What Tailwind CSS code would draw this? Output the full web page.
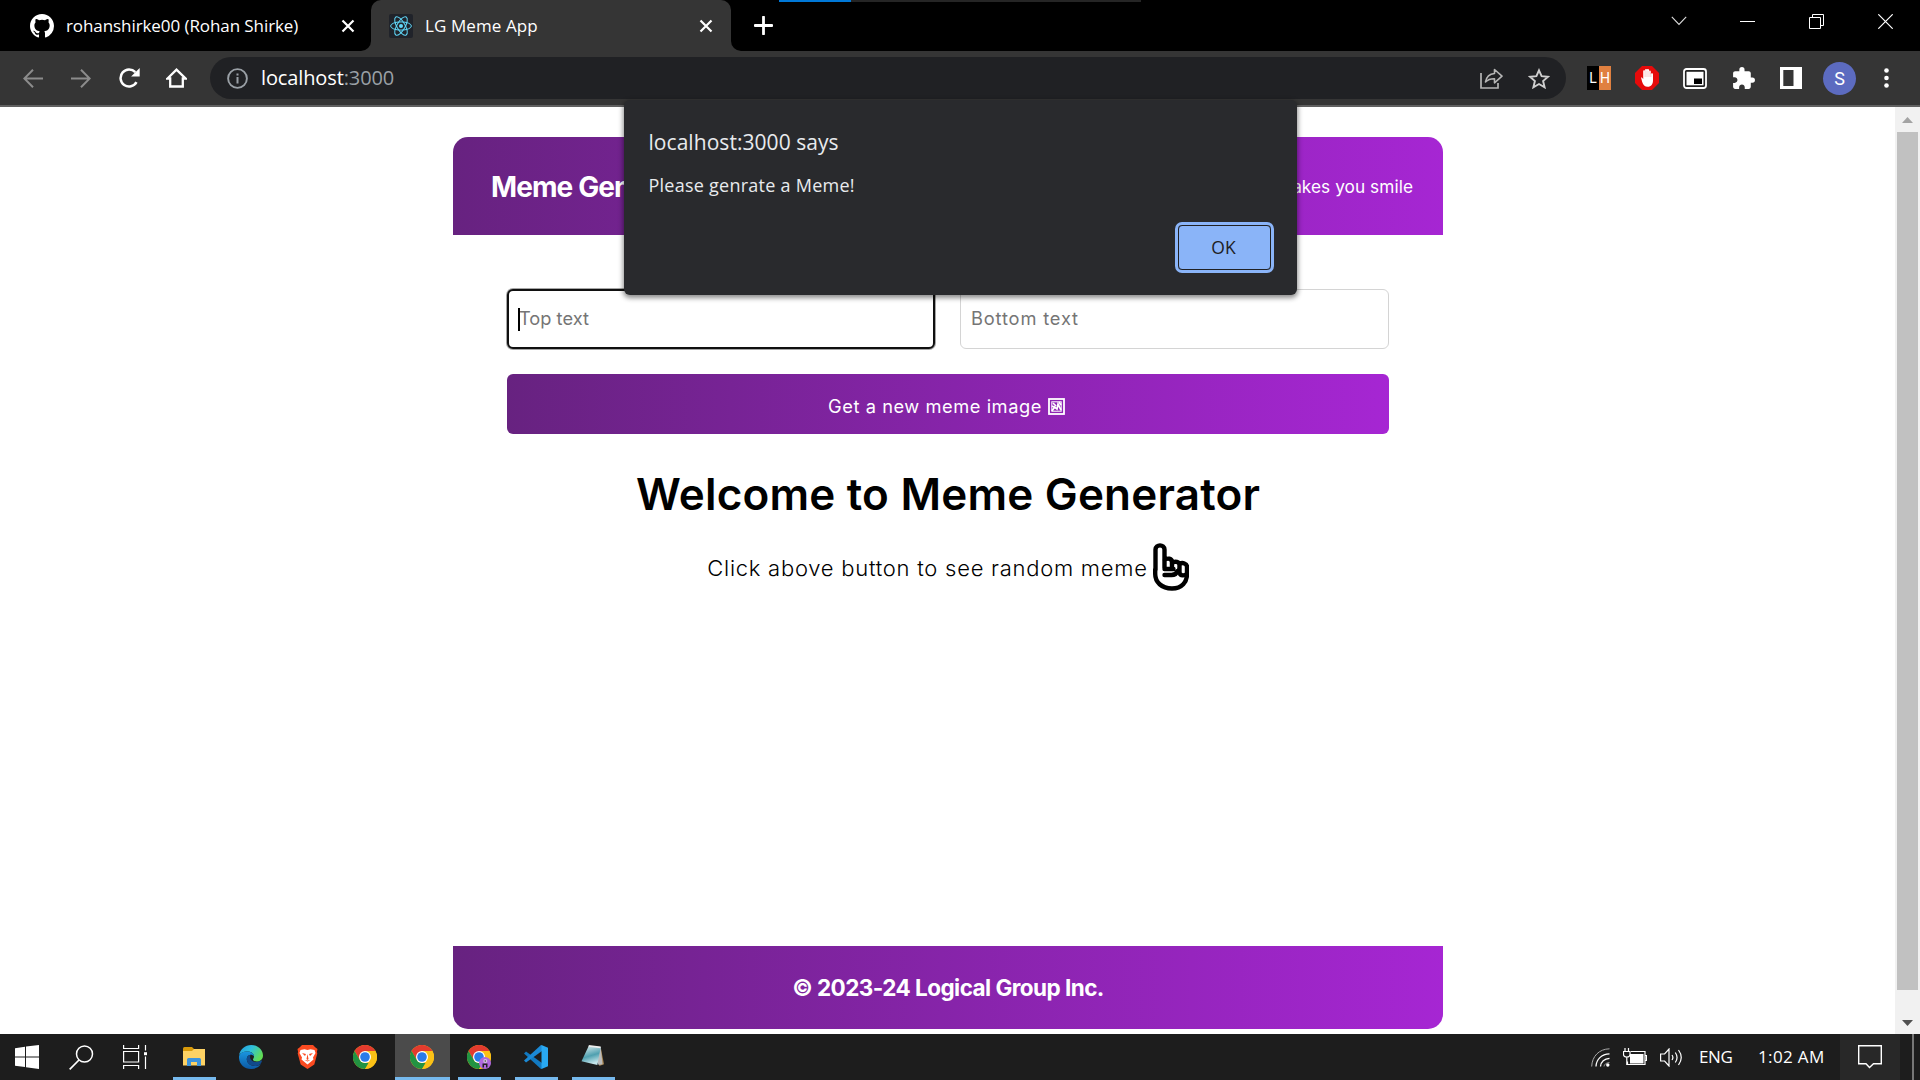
<!DOCTYPE html>
<html lang="en">
<head>
<meta charset="utf-8">
<title>LG Meme App</title>
<script src="https://cdn.jsdelivr.net/npm/@tailwindcss/browser@4"></script>
</head>
<body class="w-[1920px] h-[1080px] overflow-hidden flex flex-col relative bg-white font-['Open_Sans',sans-serif]">

<svg class="hidden">
  <defs>
    <symbol id="x" viewBox="0 0 14 14"><path d="M1.5 1.5l11 11M12.5 1.5l-11 11" stroke="#fff" stroke-width="2.2" fill="none"/></symbol>
    <symbol id="chrome" viewBox="0 0 48 48">
      <circle cx="24" cy="24" r="24" fill="#fbc116"/>
      <path d="M3.2 12A24 24 0 0 1 44.8 12H24L13.6 30z" fill="#e33b2e"/>
      <path d="M3.2 12L13.6 30A12 12 0 0 0 24 36h10.4L24 48A24 24 0 0 1 3.2 12z" fill="#229342"/>
      <path d="M34.4 30L24 48A24 24 0 0 0 44.8 12H24z" fill="#fbc116"/>
      <circle cx="24" cy="24" r="12" fill="#fff"/>
      <circle cx="24" cy="24" r="9.6" fill="#2a7be9"/>
    </symbol>
  </defs>
</svg>

<!-- Tab strip -->
<header class="h-[51px] shrink-0 bg-black flex relative">
  <div class="w-[371px] flex items-center pl-[30px] pr-[16px] bg-black rounded-br-[10px] z-10">
    <svg class="size-6 shrink-0" viewBox="0 0 16 16" fill="#fff"><path d="M8 0C3.58 0 0 3.58 0 8c0 3.54 2.29 6.53 5.47 7.59.4.07.55-.17.55-.38 0-.19-.01-.82-.01-1.49-2.01.37-2.53-.49-2.69-.94-.09-.23-.48-.94-.82-1.13-.28-.15-.68-.52-.01-.53.63-.01 1.08.58 1.23.82.72 1.21 1.87.87 2.33.66.07-.52.28-.87.51-1.07-1.78-.2-3.64-.89-3.64-3.95 0-.87.31-1.59.82-2.15-.08-.2-.36-1.02.08-2.12 0 0 .67-.21 2.2.82a7.6 7.6 0 0 1 4 0c1.53-1.04 2.2-.82 2.2-.82.44 1.1.16 1.92.08 2.12.51.56.82 1.27.82 2.15 0 3.07-1.87 3.75-3.65 3.95.29.25.54.73.54 1.48 0 1.07-.01 1.93-.01 2.2 0 .21.15.46.55.38A8 8 0 0 0 16 8c0-4.42-3.58-8-8-8z"/></svg>
    <span class="ml-[12px] text-[17px] tracking-[-0.08px] text-white whitespace-nowrap">rohanshirke00 (Rohan Shirke)</span>
    <svg class="size-[14px] ml-auto"><use href="#x"/></svg>
  </div>
  <div class="absolute left-[361px] top-[39px] w-[380px] h-3 bg-[#353535]"></div>
  <div class="w-[360px] flex items-center pl-[18px] pr-[18px] bg-[#353535] rounded-t-[10px] relative">
    <svg class="size-6 shrink-0" viewBox="0 0 24 24"><rect width="24" height="24" rx="2" fill="#20232a"/><g fill="none" stroke="#61dafb" stroke-width="1"><ellipse cx="12" cy="12" rx="10.4" ry="4.1"/><ellipse cx="12" cy="12" rx="10.4" ry="4.1" transform="rotate(60 12 12)"/><ellipse cx="12" cy="12" rx="10.4" ry="4.1" transform="rotate(120 12 12)"/></g><circle cx="12" cy="12" r="2" fill="#61dafb"/></svg>
    <span class="ml-[12px] text-[17px] tracking-[0.1px] text-white whitespace-nowrap">LG Meme App</span>
    <svg class="size-[14px] ml-auto"><use href="#x"/></svg>
  </div>
  <div class="flex-1 flex items-center pl-[23px] bg-black rounded-bl-[10px] z-10">
    <svg class="size-[19px]" viewBox="0 0 19 19"><path d="M9.5 1v17M1 9.5h17" stroke="#fff" stroke-width="2.8" stroke-linecap="round"/></svg>
    <div class="ml-auto flex items-center h-[42px] mb-[9px]">
      <svg class="w-4 h-2.5 mr-[53px]" viewBox="0 0 16 10"><path d="M.8.8L8 8.5 15.2.8" stroke="#ddd" stroke-width="1.1" fill="none"/></svg>
      <div class="w-[15px] h-px bg-white mr-[54px]"></div>
      <svg class="size-[15px] mr-[54px]" viewBox="0 0 15 15"><path d="M.5 3.5h11v11H.5zM3.5 3.5v-3h11v11h-3" stroke="#fff" fill="none"/></svg>
      <svg class="size-[15px] mr-[27px]" viewBox="0 0 15 15"><path d="M.3.3l14.4 14.4M14.7.3L.3 14.7" stroke="#fff" stroke-width="1.2"/></svg>
    </div>
  </div>
  <div class="absolute z-20 top-0 left-[779px] w-[362px] h-0.5 bg-[#252525]"><div class="w-[72px] h-full bg-[#0078d7]"></div></div>
</header>

<!-- Toolbar -->
<nav class="h-[56px] shrink-0 bg-[#353535] border-b-2 border-[#606060] flex items-center pl-[23px]">
  <svg class="w-5 h-[19px]" viewBox="0 0 20 19"><path d="M20 9.5H1.5M10 .8L1.3 9.5l8.7 8.7" stroke="#8c8c8c" stroke-width="2" fill="none"/></svg>
  <svg class="w-5 h-[19px] ml-[28px]" viewBox="0 0 20 19"><path d="M0 9.5h18.500M10 .8l8.700 8.700L10 18.200" stroke="#8c8c8c" stroke-width="2" fill="none"/></svg>
  <svg class="w-[22px] h-5 ml-[28px]" viewBox="0 0 22 20"><path d="M17.500 14.200A8.500 8.500 0 1 1 16.300 4.200" stroke="#fff" stroke-width="2.500" fill="none"/><path d="M20.700 0v8.600h-8.600z" fill="#fff"/></svg>
  <svg class="w-[21px] h-5 ml-[25px]" viewBox="0 0 21 20"><path d="M1.500 10.500L10.500 1.700l9 8.800h-2.700v8H4.200v-8z" stroke="#fff" stroke-width="2.300" fill="none"/></svg>
  <div class="ml-[23px] w-[1356px] h-[42px] rounded-full bg-[#202124] flex items-center pl-[17px] pr-[16px]">
    <svg class="size-[21px]" viewBox="0 0 21 21"><circle cx="10.500" cy="10.500" r="9.400" stroke="#9aa0a6" stroke-width="1.900" fill="none"/><path d="M9.500 9h2v6.500h-2zM9.500 5.500h2v2h-2z" fill="#9aa0a6"/></svg>
    <span class="ml-[13px] text-[20px] tracking-[-0.12px] text-white whitespace-nowrap">localhost<span class="text-[#9aa0a6]">:3000</span></span>
    <svg class="ml-auto w-[23px] h-[21px]" viewBox="0 0 23 21"><path d="M1 5v15h17v-5" stroke="#b5b5b5" stroke-width="1.700" fill="none"/><path d="M5.500 14C6.500 8.500 10 5.800 14.500 5.500V1.500l7.500 6.700-7.500 6.600v-4C10.500 10.700 8 11.500 5.500 14z" stroke="#b5b5b5" stroke-width="1.600" fill="none" stroke-linejoin="round"/></svg>
    <svg class="ml-[25px] w-[22px] h-[21px]" viewBox="0 0 22 21"><path d="M11 2.300l2.600 5.900 6.400.6-4.900 4.200 1.500 6.300L11 16l-5.600 3.300 1.500-6.300L2 8.800l6.400-.6z" stroke="#cfcfcf" stroke-width="1.900" fill="none"/></svg>
  </div>
  <div class="ml-[21px] size-6 flex text-[14px] leading-[25px] text-white text-center font-['Roboto',sans-serif]"><span class="w-3 h-6 bg-black">L</span><span class="w-3 h-6 bg-[#e08040]">H</span></div>
  <svg class="ml-6 size-6" viewBox="0 0 24 24"><path d="M7 0h10l7 7v10l-7 7H7l-7-7V7z" fill="#e60b0b"/><path d="M6 11.500c.8-.3 1.600.4 2.200 1.700V5.200c0-1.400 1.900-1.400 1.900 0V4c0-1.400 1.900-1.400 1.900 0 0-1.400 2-1.300 2 .2v1.300c0-1.200 1.800-1.200 1.800 0v2.700c.2-1.200 2.200-1.200 2.200.2v6c0 3.600-1.900 6.300-5.200 6.300-3.200 0-4.600-2-5.600-4.800z" fill="#fff"/><path d="M10.100 5v6M12 4.500V11M14 5v6M15.800 7v4" stroke="#e99" stroke-width=".5"/></svg>
  <svg class="ml-6 w-6 h-[21px]" viewBox="0 0 24 21"><rect x="1" y="1" width="22" height="19" rx="2.500" stroke="#fff" stroke-width="1.800" fill="#222"/><rect x="3.500" y="3.800" width="17" height="13.500" fill="#fff"/><rect x="11" y="10.500" width="8" height="5.500" fill="#000"/></svg>
  <svg class="ml-[24px] size-[25px]" viewBox="0 0 24 24" fill="#fff"><path d="M20.500 11H19V7c0-1.100-.9-2-2-2h-4V3.500a2.500 2.500 0 0 0-5 0V5H4c-1.100 0-1.990.9-1.990 2v3.800H3.500c1.490 0 2.700 1.210 2.700 2.700s-1.210 2.700-2.700 2.700H2V20c0 1.100.9 2 2 2h3.800v-1.500c0-1.490 1.210-2.700 2.700-2.700s2.700 1.210 2.700 2.700V22H17c1.100 0 2-.9 2-2v-4h1.500a2.500 2.500 0 0 0 0-5z"/></svg>
  <svg class="ml-[24px] w-[22px] h-[22px]" viewBox="0 0 22 22"><path fill-rule="evenodd" d="M0 0h22v22H0zM3.300 3v16h10.200V3z" fill="#fff"/></svg>
  <div class="ml-[21px] size-[33px] rounded-full bg-[#5c6bc0] text-white text-[18px] flex items-center justify-center font-['Roboto',sans-serif]">S</div>
  <svg class="ml-[28px] w-[5px] h-5" viewBox="0 0 5 20" fill="#fff"><circle cx="2.500" cy="2.500" r="2.300"/><circle cx="2.500" cy="10" r="2.300"/><circle cx="2.500" cy="17.500" r="2.300"/></svg>
</nav>

<!-- Page -->
<div class="h-[927px] shrink-0 flex">
  <main class="w-[1895px] pl-[453px] pt-[30px] font-['Inter',sans-serif] flex flex-col">
    <header class="w-[990px] h-[98px] rounded-t-[15px] bg-linear-to-r/srgb from-[#672280] to-[#a626d3] text-white flex items-center justify-between pl-[38px] pr-[30px] pt-[2px]">
      <h1 class="text-[28px] font-bold tracking-[-0.900px]">Meme Generator</h1>
      <p class="text-[17.250px] tracking-[0.050px]">Find your meme that makes you smile</p>
    </header>
    <section class="w-[882px] ml-[54px] mt-[54px] grid grid-cols-[428px_429px] justify-between gap-y-[25px]">
      <div class="h-[60px] rounded-[6px] border-2 border-[#101010] shadow-[0_0_0_1px_rgba(0,0,0,0.35)] bg-white flex items-center pl-[9px] text-[18.250px] text-[#757575]"><span class="w-[2px] h-[23px] bg-black -mr-px z-10"></span>Top text</div>
      <div class="h-[60px] rounded-[6px] border border-[#d4d4d4] bg-white flex items-center pl-[10px] text-[18.250px] tracking-[0.850px] text-[#757575]">Bottom text</div>
      <div class="col-span-2 h-[60px] pt-[6px] pr-[3px] rounded-[6px] bg-linear-to-r/srgb from-[#672280] to-[#a626d3] text-white text-[18.250px] tracking-[0.550px] flex items-center justify-center">Get a new meme image
        <svg class="ml-[6px] mb-[2px] size-[17px]" viewBox="0 0 17 17" fill="none" stroke="#fff"><rect x="1" y="1" width="15" height="15" stroke-width="1.800"/><rect x="3.800" y="3.800" width="9.400" height="9.400" stroke-width="1"/><path d="M4 13l2.500-4L9 11l1-5 3 6M5 5l3 3M11 4l2 3M4 8l2 1" stroke-width="1.700"/></svg>
      </div>
    </section>
    <h2 class="w-[990px] mt-[32px] text-center text-[44px] leading-[56px] font-semibold tracking-[0.200px] text-black">Welcome to Meme Generator</h2>
    <p class="w-[990px] h-[50px] mt-[20px] flex justify-center items-center text-[22px] tracking-[0.740px] font-light text-black"><span class="pt-[2px]">Click above button to see random meme</span>
      <svg class="ml-[5px] w-[36px] h-[48px] shrink-0" viewBox="0 0 36 48" fill="none" stroke="#000" stroke-width="4.400" stroke-linejoin="round" stroke-linecap="round"><path d="M2.500 27V6.500C2.500 1 11.500 1 11.500 6.500V25M11.500 17c3-2.500 7.500-1.500 7.500 2v7M19 20c3-2.500 7.500-1 7.500 2v8M26.500 21c3-2 7.500-.5 7.500 3v7c0 8-5 14.500-15 14.500C8.500 45.500 2.200 39 2.200 31v-5M26.500 30c1 3 5 3 7 1M11.500 32h7c3 0 5-1 6-4M11.500 26h9"/></svg>
    </p>
    <footer class="w-[990px] h-[83px] mt-auto mb-[5px] rounded-b-[15px] bg-linear-to-r/srgb from-[#672280] to-[#a626d3] text-white text-[22.500px] font-bold tracking-[-0.550px] flex items-center justify-center">© 2023-24 Logical Group Inc.</footer>
  </main>
  <div class="w-[25px] bg-[#f1f1f1] flex flex-col items-center pt-[10px] pb-[8px]">
    <svg class="w-[11px] h-[6px]" viewBox="0 0 11 6"><path d="M0 6L5.500 0 11 6z" fill="#a3a3a3"/></svg>
    <div class="mt-[9px] w-[21px] h-[858px] bg-[#c1c1c1]"></div>
    <svg class="mt-auto w-[11px] h-[6px]" viewBox="0 0 11 6"><path d="M0 0l5.500 6L11 0z" fill="#505050"/></svg>
  </div>
</div>

<!-- Alert dialog -->
<div class="absolute z-30 left-[624px] top-[100px] w-[673px] h-[195px] rounded-[6px] bg-[#292a2d] shadow-[0_2px_5px_1px_rgba(0,0,0,0.45)] text-[#e8eaed] pl-[24.500px] pr-[26px] flex flex-col">
  <div class="mt-[27px] text-[21px] leading-[30px] tracking-[0.050px]">localhost:3000 says</div>
  <div class="mt-[15px] text-[18px] leading-[26px] tracking-[0.250px]">Please genrate a Meme!</div>
  <div class="mt-[27px] self-end w-[93px] h-[45px] rounded-[4px] bg-[#8ab4f8] border border-[#202124] outline-[3px] outline-[#8ab4f8] text-[#202124] text-[17.500px] flex items-center justify-center pr-[2px]">OK</div>
</div>

<!-- Taskbar -->
<footer class="h-[46px] shrink-0 bg-[#1d1d1d] flex items-stretch text-white">
  <div class="w-[165px] flex items-center pl-[15px]">
    <svg class="size-6" viewBox="0 0 24 24" fill="#fff"><path d="M0 3.200l10-1.400v9.700H0zM11 1.600L24 0v11.500H11zM0 12.500h10v9.600L0 20.800zM11 12.500h13V24l-13-1.700z"/></svg>
    <svg class="ml-[30px] size-[25px]" viewBox="0 0 25 25"><circle cx="15.500" cy="9" r="8" stroke="#fff" stroke-width="1.500" fill="none"/><path d="M10 15L.7 24.300" stroke="#fff" stroke-width="1.700"/></svg>
    <svg class="ml-[29px] w-6 h-6" viewBox="0 0 24 24" fill="none" stroke="#fff" stroke-width="1.200"><path d="M.6 0v3.500h15V0M.6 6.500h15v10.500H.6zM.6 24v-3.500h15V24M22.500 0v5.500M22.500 11.500V24"/><path d="M21 7.200h3v3h-3z" fill="#fff" stroke="none"/></svg>
  </div>
  <div class="w-[58px] flex items-center justify-center relative">
    <svg class="w-[22px] h-[20px]" viewBox="0 0 22 20"><path d="M0 1.500Q0 0 1.500 0H9l2 2v4H0z" fill="#d99a0a"/><path d="M0 4h9l2-2h11v16.500H0z" fill="#fdd264"/><path d="M4 19v-6.500q0-1.500 1.500-1.500h11q1.500 0 1.500 1.500V19h-4v-4H8v4z" fill="#3d94dc"/></svg>
    <div class="absolute bottom-0 w-[43px] h-[3px] bg-[#76b9ed]"></div>
  </div>
  <div class="w-[56px] flex items-center justify-center">
    <svg class="size-6" viewBox="0 0 24 24"><defs><linearGradient id="e1" x1="0" x2="1" y1="0" y2=".5"><stop stop-color="#2297dd"/><stop offset=".5" stop-color="#2fc0dc"/><stop offset="1" stop-color="#61dc55"/></linearGradient><linearGradient id="e2" x1="0" x2="0" y1="0" y2="1"><stop stop-color="#1a96e0"/><stop offset="1" stop-color="#0c59a4"/></linearGradient></defs><path d="M0 10.500C1 4.200 6 0 12.200 0 19 0 24 4.800 24 10.500c0 3.500-2.600 6-6 6-2.500 0-4-1-4-2 0-.7 1-1.200 1-3.200 0-2.500-2.600-4.800-6.300-4.800C4 6.500 1 8.500 0 10.500z" fill="url(#e1)"/><path d="M0 11.500C.4 8.200 4 6.400 8.500 6.400c4 0 6.500 2.600 6.500 4.800-.8-1-2-1.600-3.400-1.500C9 10 7.500 12 7.800 14.500c.3 4 4 6.500 8.200 6.500 2 0 4.200-.6 6-1.800A12 12 0 0 1 12 24C5 24-.4 18.500 0 11.500z" fill="url(#e2)"/><path d="M7.800 14.500c-.2-2.500 1.300-4.500 3.800-4.800-1 1.500-.6 4 1 5.600 2 2 6 2.200 9.600.2.700-.3 1 .2.700.8-.4 1-.8 1.800-1.500 2.600-4.500 3.700-13 2.300-13.600-4.400z" fill="#114a8b"/></svg>
  </div>
  <div class="w-[58px] flex items-center justify-center pr-px">
    <svg class="w-[21px] h-6" viewBox="0 0 21 24"><path d="M5 0h11l2.500 2.500L20.500 4l-.6 3 .4 1.500-3 11L10.500 24l-6.800-4.500-3-11L1.100 7 .5 4l2-1.500z" fill="#fb4a20"/><path d="M3.500 5l4-.8 3 .8 3-.8 4 .8 1 3-2.500 4.500.5 2-3 2.500-3 2.500-3-2.500-3-2.500.5-2L2.500 8z" fill="#fff"/><path d="M5 8l4 1-1 2zM16 8l-4 1 1 2zM10.500 9l1 5-1 1-1-1zM7.500 15l3 1.500 3-1.500-3 .5z" fill="#fb4a20"/></svg>
  </div>
  <div class="w-[58px] flex items-center pl-[16px]"><svg class="size-6"><use href="#chrome"/></svg></div>
  <div class="w-[55px] flex items-center pl-[15px] bg-[#4b4b4b] relative"><svg class="size-6"><use href="#chrome"/></svg><div class="absolute left-0 bottom-0 w-full h-[3px] bg-[#76b9ed]"></div></div>
  <div class="w-[58px] flex items-center justify-center relative"><svg class="size-6"><use href="#chrome"/></svg>
    <svg class="absolute left-[29px] top-[23px] size-3" viewBox="0 0 12 12"><circle cx="6" cy="6" r="6" fill="#b068e0"/><path d="M3.500 6.500h5V10.500h-1.500V8h-2v2.500H3.500z" fill="#222"/><circle cx="6.300" cy="4" r="2" fill="#d5c8dc"/><circle cx="6.300" cy="4" r=".8" fill="#444"/></svg>
    <div class="absolute bottom-0 w-[43px] h-[3px] bg-[#76b9ed]"></div></div>
  <div class="w-[57px] flex items-center pl-[16px] relative">
    <svg class="size-6" viewBox="0 0 24 24"><path d="M0 8.500L2 6.500 18 18v5.500L17 24z" fill="#1279c0"/><path d="M0 15.500l2 2L18 6V.5L17 0z" fill="#1b8ad6"/><path d="M17.500 0L24 2.800v18.400L17.500 24z" fill="#29a9f2"/></svg>
    <div class="absolute left-[7px] bottom-0 w-[43px] h-[3px] bg-[#76b9ed]"></div></div>
  <div class="w-[57px] flex items-center pl-[16px] pb-[3px] relative">
    <svg class="w-6 h-[22px]" viewBox="0 0 24 23"><defs><linearGradient id="n" x1="0" x2=".3" y1="0" y2="1"><stop stop-color="#e6f1f2"/><stop offset=".6" stop-color="#4fa0b0"/><stop offset="1" stop-color="#c5e6ea"/></linearGradient></defs><path d="M20 2l3.500 18-5 2z" fill="#a8854f"/><path d="M7.500 1L20 2l2 18-4 1z" fill="#bbb"/><path d="M7.500 1L20 2.500 16.500 21 0 17z" fill="url(#n)"/><path d="M7.500 1L20 2.500" stroke="#eee" stroke-width="1.800"/></svg>
    <div class="absolute left-[7px] bottom-0 w-[43px] h-[3px] bg-[#76b9ed]"></div></div>

  <div class="ml-auto flex items-center text-[17px]">
    <svg class="w-[19px] h-[19px]" viewBox="0 0 19 19" fill="none" stroke="#fff"><path d="M.7 18.500C1 8.500 8 1 18.500.8" stroke="#aaa"/><path d="M5 18.500C5.200 11.500 10.500 6 18.500 5.800M9.500 18.500c.2-4.500 4-8 9-8.200" stroke-width="1.300"/><circle cx="16.800" cy="17" r="1.700" fill="#fff" stroke="none"/><path d="M13 18.500c.1-2 2.300-4 5.500-4" stroke="#aaa" stroke-width=".8"/></svg>
    <svg class="ml-[13px] w-6 h-[18px]" viewBox="0 0 24 18" fill="none" stroke="#fff" stroke-width="1.200"><path d="M8 3.500h14v13H4.500v-3M22 7.500h1.500v5H22"/><path d="M7 6h13.500v9.500H7z" fill="#fff" stroke="none"/><path d="M2 0v3.500M5.500 0v3.500M.5 3.500H7v3Q7 9 3.800 9T.5 6.500zM3.800 9v8" fill="#1d1d1d"/></svg>
    <svg class="ml-[13px] w-[23px] h-[19px]" viewBox="0 0 23 19" fill="none" stroke="#fff" stroke-width="1.200"><path d="M.6 6h4L9 1v17l-4.400-5h-4z"/><path d="M12 7q1.800 2.500 0 5M15.300 4.500q3.500 5 0 10M18.500 2q5.500 7.500 0 15"/></svg>
    <span class="ml-[16px] w-[35px] tracking-[-0.400px]">ENG</span>
    <span class="ml-[24px] w-[67px] tracking-[0.350px] whitespace-nowrap">1:02 AM</span>
    <div class="ml-[15px] w-[60px] h-full bg-[#282828] flex items-center justify-center">
      <svg class="w-6 h-6" viewBox="0 0 24 24"><path d="M.7.7h22.600v18H15.500L11.500 22.500 8 18.700H.7z" stroke="#fff" stroke-width="1.400" fill="none"/></svg>
    </div>
    <div class="ml-[12px] mr-[6px] w-0.5 h-full bg-[#777]"></div>
  </div>
</footer>
</body>
</html>
